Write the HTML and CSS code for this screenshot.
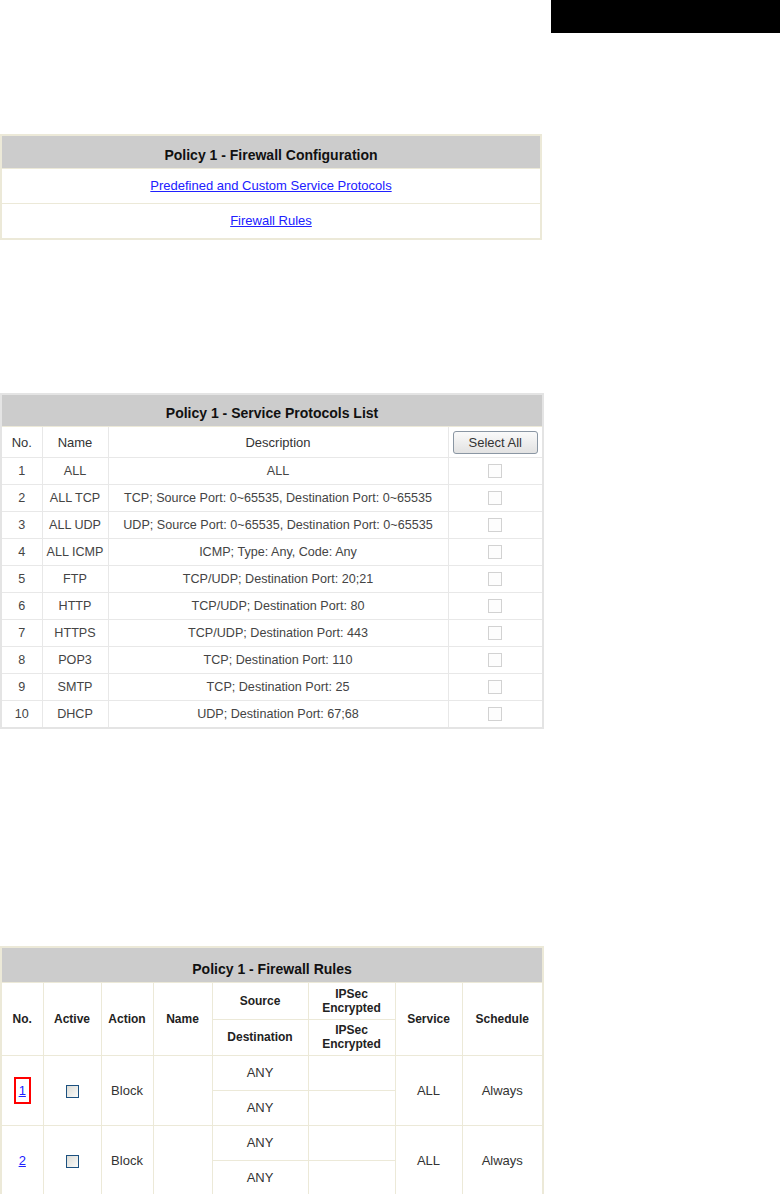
FILE: index.html
```html
<!DOCTYPE html>
<html lang="en">
<head>
    <meta charset="UTF-8">
    <title>Policy 1 - Firewall</title>
    <link rel="stylesheet" href="styles.css">
</head>
<body>
    <div class="topbar"></div>

    <table class="grid config">
        <tr><th class="title">Policy 1 - Firewall Configuration</th></tr>
        <tr><td><a href="#">Predefined and Custom Service Protocols</a></td></tr>
        <tr><td><a href="#">Firewall Rules</a></td></tr>
    </table>

    <table class="grid services">
        <colgroup>
            <col class="c-no"><col class="c-name"><col class="c-desc"><col class="c-sel">
        </colgroup>
        <tr><th class="title" colspan="4">Policy 1 - Service Protocols List</th></tr>
        <tr class="head">
            <td>No.</td><td>Name</td><td>Description</td>
            <td><button class="select-all">Select All</button></td>
        </tr>
        <tr><td>1</td><td>ALL</td><td>ALL</td><td><span class="box"></span></td></tr>
        <tr><td>2</td><td>ALL TCP</td><td>TCP; Source Port: 0~65535, Destination Port: 0~65535</td><td><span class="box"></span></td></tr>
        <tr><td>3</td><td>ALL UDP</td><td>UDP; Source Port: 0~65535, Destination Port: 0~65535</td><td><span class="box"></span></td></tr>
        <tr><td>4</td><td>ALL ICMP</td><td>ICMP; Type: Any, Code: Any</td><td><span class="box"></span></td></tr>
        <tr><td>5</td><td>FTP</td><td>TCP/UDP; Destination Port: 20;21</td><td><span class="box"></span></td></tr>
        <tr><td>6</td><td>HTTP</td><td>TCP/UDP; Destination Port: 80</td><td><span class="box"></span></td></tr>
        <tr><td>7</td><td>HTTPS</td><td>TCP/UDP; Destination Port: 443</td><td><span class="box"></span></td></tr>
        <tr><td>8</td><td>POP3</td><td>TCP; Destination Port: 110</td><td><span class="box"></span></td></tr>
        <tr><td>9</td><td>SMTP</td><td>TCP; Destination Port: 25</td><td><span class="box"></span></td></tr>
        <tr><td>10</td><td>DHCP</td><td>UDP; Destination Port: 67;68</td><td><span class="box"></span></td></tr>
    </table>

    <table class="grid rules">
        <colgroup>
            <col class="r-no"><col class="r-active"><col class="r-action"><col class="r-name">
            <col class="r-addr"><col class="r-ipsec"><col class="r-svc"><col class="r-sched">
        </colgroup>
        <tr><th class="title" colspan="8">Policy 1 - Firewall Rules</th></tr>
        <tr class="head sub1">
            <td rowspan="2">No.</td>
            <td rowspan="2">Active</td>
            <td rowspan="2">Action</td>
            <td rowspan="2">Name</td>
            <td>Source</td>
            <td>IPSec<br>Encrypted</td>
            <td rowspan="2">Service</td>
            <td rowspan="2">Schedule</td>
        </tr>
        <tr class="head sub2">
            <td>Destination</td>
            <td>IPSec<br>Encrypted</td>
        </tr>
        <tr class="half">
            <td rowspan="2"><a href="#" class="marked">1</a></td>
            <td rowspan="2"><span class="xp-box"></span></td>
            <td rowspan="2">Block</td>
            <td rowspan="2"></td>
            <td>ANY</td>
            <td></td>
            <td rowspan="2">ALL</td>
            <td rowspan="2">Always</td>
        </tr>
        <tr class="half"><td>ANY</td><td></td></tr>
        <tr class="half">
            <td rowspan="2"><a href="#">2</a></td>
            <td rowspan="2"><span class="xp-box"></span></td>
            <td rowspan="2">Block</td>
            <td rowspan="2"></td>
            <td>ANY</td>
            <td></td>
            <td rowspan="2">ALL</td>
            <td rowspan="2">Always</td>
        </tr>
        <tr class="half"><td>ANY</td><td></td></tr>
    </table>
</body>
</html>
```

FILE: styles.css
```css
/* page */
body {
    margin: 0;
    font-family: "Liberation Sans", Arial, sans-serif;
    background: #fff;
    color: #333;
}

.topbar {
    width: 229px;
    height: 33px;
    margin-left: auto;
    background: #000;
}

/* shared table look */
.grid {
    width: 542px;
    border-collapse: collapse;
    table-layout: fixed;
    border: 2px solid #ece9d8;
    text-align: center;
    font-size: 12px;
}

.grid td,
.grid th {
    border: 1px solid #ece9d8;
    padding: 0;
}

.grid th.title {
    background: #cccccc;
    color: #111;
    font-size: 14px;
    font-weight: bold;
    height: 33px;
    vertical-align: bottom;
    padding-bottom: 5px;
    box-sizing: border-box;
}

.grid a {
    color: #2020ff;
    text-decoration: underline;
}

/* firewall configuration */
.config {
    margin-top: 101px;
    font-size: 13px;
}

.config td {
    height: 34px;
}

/* service protocols */
.services {
    margin-top: 153px;
    border-color: #e4e4e4;
    color: #444;
    font-size: 12.6px;
}

.services td {
    border-color: #e8e8e8;
    height: 26px;
}

.services .head td {
    height: 30px;
    color: #333;
    font-size: 13px;
}

.c-no { width: 41px; }
.c-name { width: 66px; }
.c-desc { width: 340px; }
.c-sel { width: 95px; }

.select-all {
    width: 85px;
    height: 23px;
    padding: 0;
    font-family: "Liberation Sans", Arial, sans-serif;
    font-size: 13px;
    color: #333;
    border: 1px solid #8a96a3;
    border-radius: 3px;
    background: linear-gradient(#fafafa, #e2e2e2);
}

.box {
    display: inline-block;
    width: 12px;
    height: 12px;
    border: 1px solid #d2d2d2;
    background: #fdfdfd;
    vertical-align: middle;
}

/* firewall rules */
.rules {
    margin-top: 217px;
    font-size: 13px;
}

.rules th.title {
    height: 35px;
}

.rules .head td {
    font-weight: bold;
    font-size: 12px;
    color: #222;
    line-height: 14px;
}

.rules .sub1 td { height: 36px; }
.rules .sub2 td { height: 35px; }
.rules .half td { height: 34px; }

.r-no { width: 42px; }
.r-active { width: 58px; }
.r-action { width: 52px; }
.r-name { width: 59px; }
.r-addr { width: 96px; }
.r-ipsec { width: 87px; }
.r-svc { width: 67px; }
.r-sched { width: 81px; }

.marked {
    display: inline-block;
    padding: 5px 3px 4px;
    border: 2px solid #ff0000;
    line-height: 14px;
}

.xp-box {
    display: inline-block;
    width: 11px;
    height: 11px;
    border: 1px solid #1c5180;
    background: linear-gradient(135deg, #dcdcd6, #fbfbf9);
    vertical-align: middle;
}
```
